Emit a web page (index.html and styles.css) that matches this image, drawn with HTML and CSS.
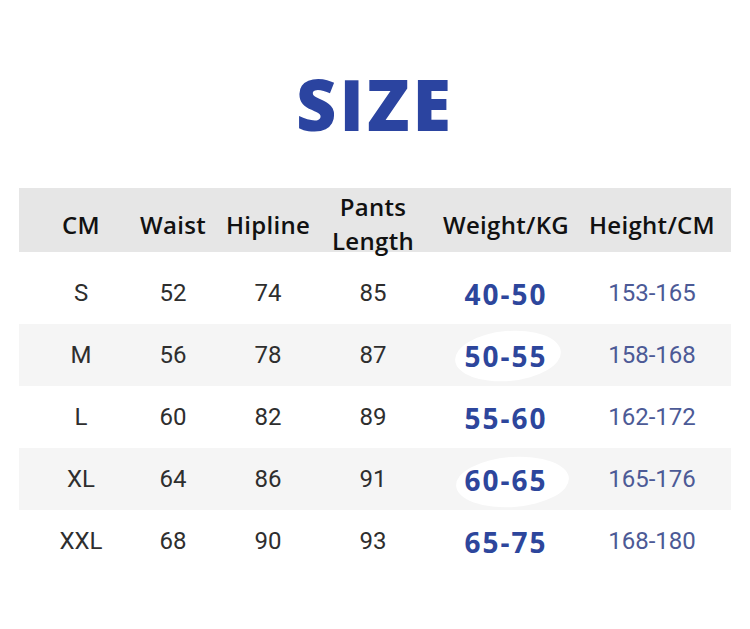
FILE: index.html
```html
<!DOCTYPE html>
<html>
<head>
<meta charset="utf-8">
<link rel="stylesheet" href="styles.css">
</head>
<body>
<div class="page">
  <h1 class="title">SIZE</h1>
  <div class="table">
    <div class="row head">
      <div class="c c1"><span>CM</span></div>
      <div class="c c2"><span>Waist</span></div>
      <div class="c c3"><span>Hipline</span></div>
      <div class="c c4"><span class="two">Pants<br>Length</span></div>
      <div class="c c5"><span>Weight/KG</span></div>
      <div class="c c6"><span>Height/CM</span></div>
    </div>
    <div class="row first">
      <div class="c c1">S</div><div class="c c2">52</div><div class="c c3">74</div><div class="c c4">85</div>
      <div class="c c5"><span class="kg">40-50</span></div><div class="c c6 ht">153-165</div>
    </div>
    <div class="row alt">
      <div class="c c1">M</div><div class="c c2">56</div><div class="c c3">78</div><div class="c c4">87</div>
      <div class="c c5"><span class="kg mark m1">50-55</span></div><div class="c c6 ht">158-168</div>
    </div>
    <div class="row">
      <div class="c c1">L</div><div class="c c2">60</div><div class="c c3">82</div><div class="c c4">89</div>
      <div class="c c5"><span class="kg">55-60</span></div><div class="c c6 ht">162-172</div>
    </div>
    <div class="row alt">
      <div class="c c1">XL</div><div class="c c2">64</div><div class="c c3">86</div><div class="c c4">91</div>
      <div class="c c5"><span class="kg mark m2">60-65</span></div><div class="c c6 ht">165-176</div>
    </div>
    <div class="row">
      <div class="c c1">XXL</div><div class="c c2">68</div><div class="c c3">90</div><div class="c c4">93</div>
      <div class="c c5"><span class="kg">65-75</span></div><div class="c c6 ht">168-180</div>
    </div>
  </div>
</div>
</body>
</html>
```
FILE: styles.css
```css
html, body {
  margin: 0;
  padding: 0;
  background: #ffffff;
}
.page {
  width: 750px;
  height: 629px;
  overflow: hidden;
}
.title {
  margin: 0;
  padding-top: 69px;
  height: 70px;
  line-height: 70px;
  text-align: center;
  font-family: "Open Sans", sans-serif;
  font-weight: 800;
  font-size: 70px;
  letter-spacing: 3px;
  color: #2b44a0;
  margin-bottom: 49px;
}
.table {
  margin-left: 19px;
  width: 712px;
}
.row {
  display: flex;
  height: 62px;
  font-family: Roboto, sans-serif;
  font-size: 24px;
  color: #2e2e2e;
}
.row.head {
  height: 64px;
  background: #e6e6e6;
  font-family: "Open Sans", sans-serif;
  font-weight: 600;
  font-size: 24px;
  letter-spacing: 0.3px;
  color: #111111;
  margin-bottom: 10px;
}
.row.alt {
  background: #f5f5f5;
}
.c {
  display: flex;
  justify-content: center;
  align-items: center;
  white-space: nowrap;
}
.head .c span {
  padding-top: 8px;
}
.head .c .two {
  line-height: 34px;
  text-align: center;
}
.c1 { width: 124px; }
.c2 { width: 60px; }
.c3 { width: 130px; }
.c4 { width: 80px; }
.c5 { width: 186px; }
.c6 { width: 106px; }
.ht {
  color: #4c5a96;
}
.kg {
  position: relative;
  font-family: "Open Sans", sans-serif;
  font-weight: 700;
  font-size: 28px;
  letter-spacing: 2px;
  color: #2d469c;
  padding-top: 2px;
}
.mark::before {
  content: "";
  position: absolute;
  background: #ffffff;
  border-radius: 50%;
  z-index: -1;
}
.kg.mark {
  z-index: 0;
}
.m1::before {
  left: -9px;
  right: -14px;
  top: -4px;
  bottom: -6px;
  transform: rotate(-5deg);
}
.m2::before {
  left: -8px;
  right: -22px;
  top: -2px;
  bottom: -8px;
  transform: rotate(-4deg);
}
```
